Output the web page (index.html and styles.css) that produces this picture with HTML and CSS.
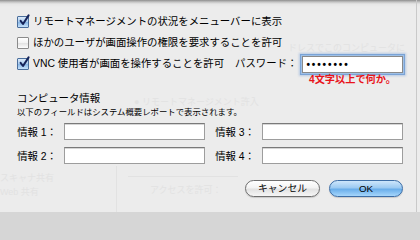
FILE: index.html
```html
<!DOCTYPE html>
<html lang="ja">
<head>
<meta charset="utf-8">
<link rel="stylesheet" href="styles.css">
</head>
<body>
<div class="screen">
  <div class="ghost" aria-hidden="true">
    <span class="g g3">ドレスでこのコンピュータに</span>
    <span class="g g5">● リモートマネージメント許入</span>
    <span class="g g10">スキャナ共有</span>
    <span class="g g11">Web 共有</span>
    <span class="g g13">アクセスを許可：</span>
    <span class="gl gl1"></span>
    <span class="gl gl2"></span>
  </div>
  <div class="sheet">
    <div class="row r1">
      <span class="cb on"><svg viewBox="0 0 12 12" width="12" height="12"><path d="M2.6 5.8 L5 9 L10.6 0.4" fill="none" stroke="#16245a" stroke-width="2" stroke-linecap="round" stroke-linejoin="round"/></svg></span>
      <span class="txt">リモートマネージメントの状況をメニューバーに表示</span>
    </div>
    <div class="row r2">
      <span class="cb"></span>
      <span class="txt">ほかのユーザが画面操作の権限を要求することを許可</span>
    </div>
    <div class="row r3">
      <span class="cb on"><svg viewBox="0 0 12 12" width="12" height="12"><path d="M2.6 5.8 L5 9 L10.6 0.4" fill="none" stroke="#16245a" stroke-width="2" stroke-linecap="round" stroke-linejoin="round"/></svg></span>
      <span class="txt">VNC 使用者が画面を操作することを許可</span>
      <span class="pwlabel">パスワード：</span>
      <span class="pwfield">••••••••</span>
    </div>
    <div class="warn">4文字以上で何か。</div>
    <div class="heading">コンピュータ情報</div>
    <div class="note">以下のフィールドはシステム概要レポートで表示されます。</div>
    <div class="info">
      <span class="lbl">情報 1：</span><span class="field"></span>
      <span class="lbl">情報 3：</span><span class="field"></span>
      <span class="lbl">情報 2：</span><span class="field"></span>
      <span class="lbl">情報 4：</span><span class="field"></span>
    </div>
    <div class="buttons">
      <span class="btn cancel">キャンセル</span>
      <span class="btn ok">OK</span>
    </div>
  </div>
</div>
</body>
</html>
```

FILE: styles.css
```css
html, body {
  margin: 0;
  padding: 0;
}
body {
  width: 420px;
  height: 212px;
  overflow: hidden;
  background: #d6d6d6;
  font-family: "Liberation Sans", "Noto Sans CJK JP", sans-serif;
  color: #000;
}
.screen {
  position: relative;
  width: 420px;
  height: 212px;
  overflow: hidden;
  background: linear-gradient(to bottom, #8e8e8e 0px, #c4c4c4 2px, #e6e6e6 4px, #ececec 7px);
}
.ghost {
  position: absolute;
  inset: 0;
  font-size: 9px;
  color: #e2e2e2;
  z-index: 0;
}
.g { position: absolute; white-space: nowrap; }
.g3 { left: 288px; top: 41px; }
.g5 { left: 134px; top: 95px; }
.g10 { left: 0px; top: 171px; }
.g11 { left: 0px; top: 185px; }
.g13 { left: 150px; top: 183px; }
.gl { position: absolute; background: #e2e2e2; }
.gl1 { left: 128px; top: 176px; width: 110px; height: 1px; }
.gl2 { left: 116px; top: 166px; width: 1px; height: 46px; }

.sheet {
  position: relative;
  z-index: 1;
  height: 212px;
  box-sizing: border-box;
  margin: 0 3px 0 4px;
  border-right: 1px solid #c9c9c9;
  padding: 12px 0 0 13px;
  font-size: 10.4px;
  display: flex;
  flex-direction: column;
}
.row {
  display: flex;
  align-items: center;
  height: 20px;
  line-height: 1;
  white-space: nowrap;
}
.r2 { margin-top: 1px; }
.r3 { margin-top: 1px; }
.cb {
  width: 10px;
  height: 10px;
  flex: none;
  border: 1px solid #8b8b8b;
  border-radius: 1px;
  background: linear-gradient(to bottom, #ffffff 0%, #f2f2f2 50%, #e2e2e2 51%, #fdfdfd 100%);
  margin-right: 4px;
  position: relative;
}
.cb.on {
  border-color: #4a6e9c;
  background: linear-gradient(to bottom, #dbeaf9 0%, #a9cbef 50%, #86b5e6 51%, #c6e1fa 100%);
}
.cb svg {
  position: absolute;
  left: 0;
  top: -2px;
  overflow: visible;
}
.pwlabel {
  margin-left: 11px;
}
.pwfield {
  margin-left: 5px;
  width: 101px;
  height: 17px;
  box-sizing: border-box;
  border: 1px solid #8a8a8a;
  background: #fff;
  box-shadow: 0 0 0 1px #9fc0e6, 0 0 0 2px #7aa3d6, 0 0 2px 3px rgba(120,160,215,0.45);
  font-size: 10px;
  font-weight: bold;
  letter-spacing: 1.9px;
  line-height: 15px;
  padding-left: 3px;
  color: #000;
}
.warn {
  margin-left: 292px;
  height: 12px;
  line-height: 12px;
  font-size: 10.2px;
  font-weight: bold;
  color: #e8141b;
  white-space: nowrap;
}
.heading {
  margin-top: 6px;
  height: 14px;
  line-height: 14px;
  white-space: nowrap;
}
.note {
  height: 12px;
  line-height: 12px;
  font-size: 8.4px;
  white-space: nowrap;
}
.info {
  margin-top: 5px;
  display: grid;
  grid-template-columns: 41px 141px 45px 141px;
  grid-auto-rows: 17px;
  row-gap: 7px;
  column-gap: 6px;
  align-items: center;
}
.lbl {
  text-align: right;
  white-space: nowrap;
  font-size: 10.4px;
  padding-right: 1px;
}
.field {
  height: 17px;
  box-sizing: border-box;
  background: #fff;
  border: 1px solid #9d9d9d;
  border-top-color: #7a7a7a;
  box-shadow: inset 0 1px 0 #d6d6d6;
}
.buttons {
  margin-top: 16px;
  display: flex;
  justify-content: flex-end;
  gap: 9px;
  padding-right: 13px;
}
.btn {
  height: 17px;
  box-sizing: border-box;
  border-radius: 9px;
  display: flex;
  align-items: center;
  justify-content: center;
  font-size: 9.8px;
  line-height: 1;
  white-space: nowrap;
}
.cancel {
  width: 75px;
  border: 1px solid #6f6f6f;
  background: linear-gradient(to bottom, #ffffff 0%, #f3f3f3 45%, #e2e2e2 55%, #f6f6f6 100%);
  box-shadow: 0 1px 1px rgba(0,0,0,0.15);
}
.ok {
  width: 74px;
  border: 1px solid #3c6da6;
  background: linear-gradient(to bottom, #cde6fb 0%, #9ccaf2 45%, #6aaeea 55%, #a6d6fb 100%);
  box-shadow: 0 1px 1px rgba(0,0,0,0.15);
}
```
